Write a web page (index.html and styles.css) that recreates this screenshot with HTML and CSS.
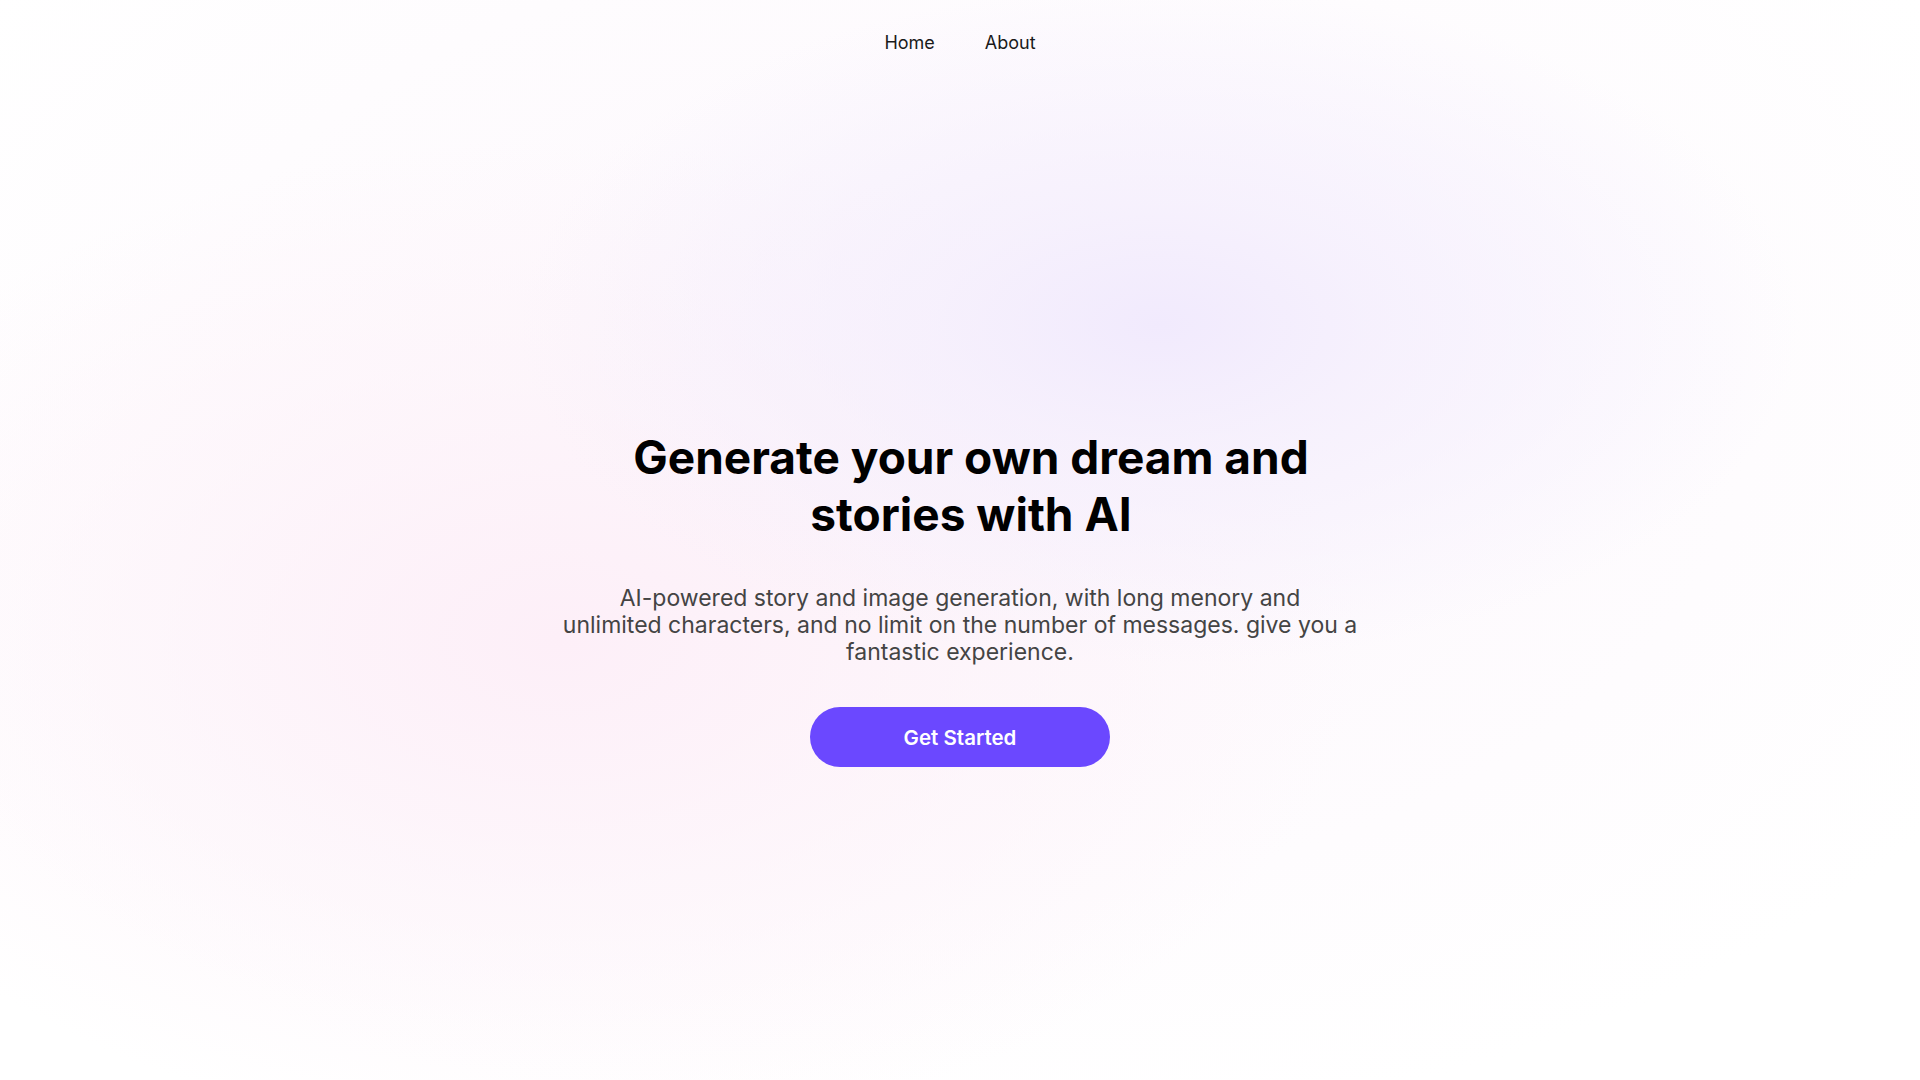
FILE: index.html
```html
<!DOCTYPE html>
<html lang="en">
<head>
<meta charset="utf-8">
<title>Dream Stories AI</title>
<link rel="stylesheet" href="styles.css">
</head>
<body>
<div class="page">
  <nav class="nav">
    <a class="nav-link" href="#">Home</a>
    <a class="nav-link" href="#">About</a>
  </nav>
  <main class="hero">
    <h1 class="hero-title">Generate your own dream and<br>stories with AI</h1>
    <p class="hero-text">AI-powered story and image generation, with long menory and<br>unlimited characters, and no limit on the number of messages. give you a<br>fantastic experience.</p>
    <a class="cta" href="#">Get Started</a>
  </main>
</div>
</body>
</html>
```
FILE: styles.css
```css
* { box-sizing: border-box; }
html, body {
  margin: 0;
  padding: 0;
  height: 100%;
}
body {
  font-family: Inter, "Noto Sans", sans-serif;
  color: #111;
  background-color: #fff;
  background-image:
    radial-gradient(ellipse 640px 340px at 1160px 325px, rgba(241, 234, 253, 1) 0%, rgba(244, 238, 253, 0.75) 35%, rgba(255, 255, 255, 0) 100%),
    radial-gradient(ellipse 800px 500px at 560px 640px, rgba(253, 239, 248, 1) 0%, rgba(253, 242, 249, 0.6) 50%, rgba(255, 255, 255, 0) 100%),
    radial-gradient(ellipse 1200px 720px at 950px 420px, rgba(252, 246, 252, 1) 0%, rgba(255, 255, 255, 0) 100%);
  background-repeat: no-repeat;
}
.page {
  min-height: 100vh;
  display: flex;
  flex-direction: column;
  align-items: center;
}
.nav {
  display: flex;
  gap: 50px;
  padding-top: 32px;
}
.nav-link {
  font-size: 18px;
  line-height: 22px;
  color: #1a1a1a;
  text-decoration: none;
  font-weight: 400;
}
.hero {
  display: flex;
  flex-direction: column;
  align-items: center;
  padding-top: 375px;
}
.hero-title {
  margin: 0;
  font-size: 46px;
  line-height: 57px;
  font-weight: 700;
  text-align: center;
  color: #000;
  padding-left: 22px;
}
.hero-text {
  margin: 42px 0 0;
  font-size: 23px;
  line-height: 27px;
  color: #444;
  text-align: center;
}
.cta {
  margin-top: 41px;
  width: 300px;
  height: 60px;
  border-radius: 30px;
  background: #6b48ff;
  color: #fff;
  font-size: 20.5px;
  font-weight: 600;
  text-decoration: none;
  display: flex;
  align-items: center;
  justify-content: center;
}
```
